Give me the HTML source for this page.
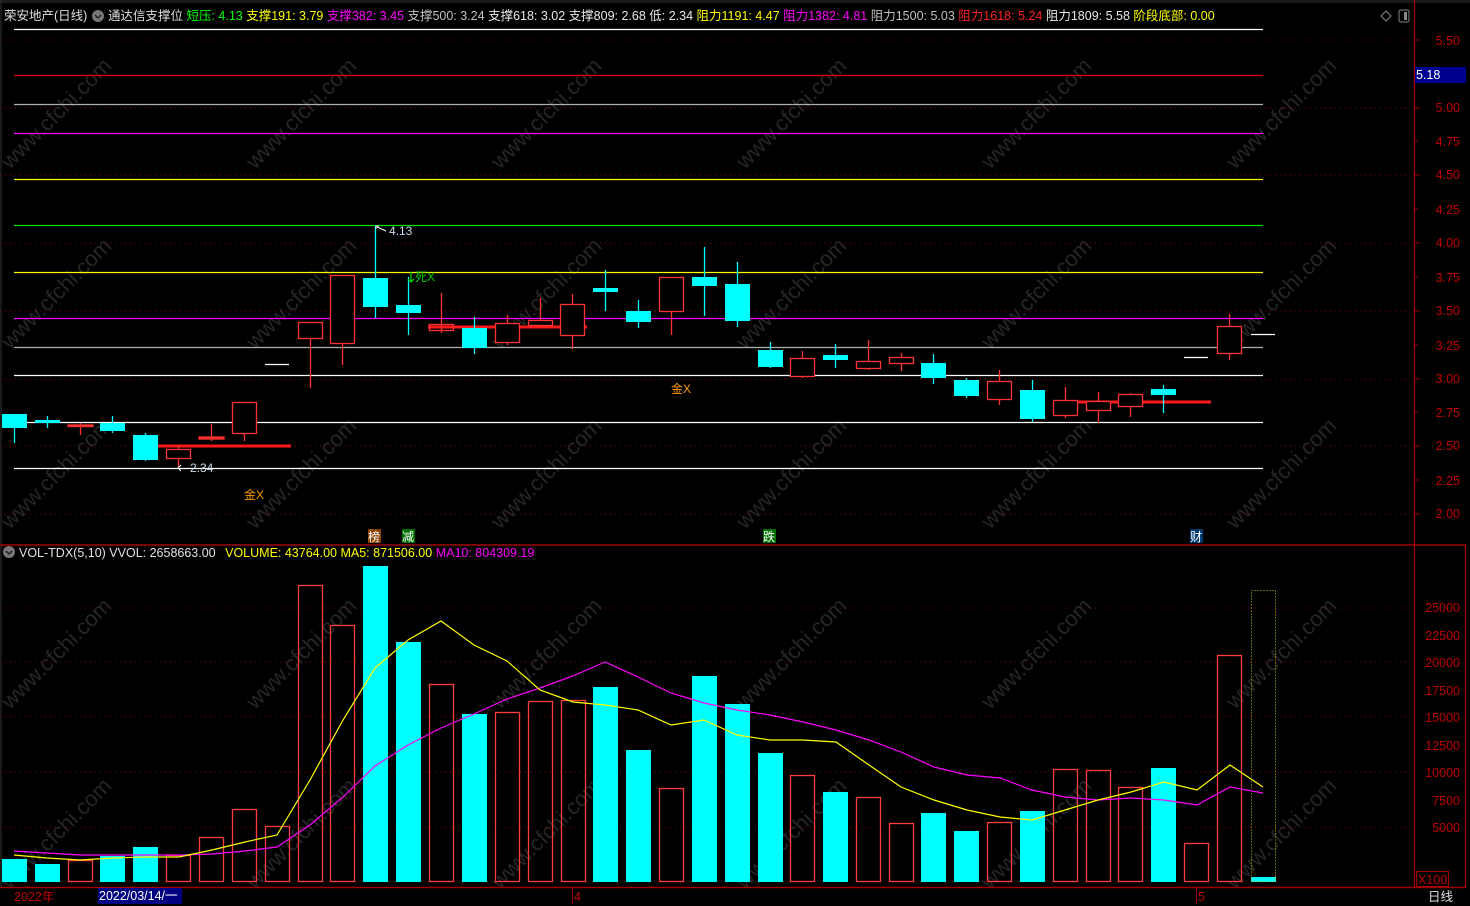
<!DOCTYPE html>
<html><head><meta charset="utf-8"><style>
html,body{margin:0;padding:0;background:#000;width:1470px;height:906px;overflow:hidden}
svg{display:block}
text{font-family:"Liberation Sans","Noto Sans CJK SC",sans-serif}
</style></head><body>
<svg width="1470" height="906" viewBox="0 0 1470 906" xmlns="http://www.w3.org/2000/svg">
<rect width="1470" height="906" fill="#000"/>
<g fill="#262626" font-size="22">
<text transform="translate(10,170) rotate(-45)">www.cfchi.com</text>
<text transform="translate(255,170) rotate(-45)">www.cfchi.com</text>
<text transform="translate(500,170) rotate(-45)">www.cfchi.com</text>
<text transform="translate(745,170) rotate(-45)">www.cfchi.com</text>
<text transform="translate(990,170) rotate(-45)">www.cfchi.com</text>
<text transform="translate(1235,170) rotate(-45)">www.cfchi.com</text>
<text transform="translate(10,350) rotate(-45)">www.cfchi.com</text>
<text transform="translate(255,350) rotate(-45)">www.cfchi.com</text>
<text transform="translate(500,350) rotate(-45)">www.cfchi.com</text>
<text transform="translate(745,350) rotate(-45)">www.cfchi.com</text>
<text transform="translate(990,350) rotate(-45)">www.cfchi.com</text>
<text transform="translate(1235,350) rotate(-45)">www.cfchi.com</text>
<text transform="translate(10,530) rotate(-45)">www.cfchi.com</text>
<text transform="translate(255,530) rotate(-45)">www.cfchi.com</text>
<text transform="translate(500,530) rotate(-45)">www.cfchi.com</text>
<text transform="translate(745,530) rotate(-45)">www.cfchi.com</text>
<text transform="translate(990,530) rotate(-45)">www.cfchi.com</text>
<text transform="translate(1235,530) rotate(-45)">www.cfchi.com</text>
<text transform="translate(10,710) rotate(-45)">www.cfchi.com</text>
<text transform="translate(255,710) rotate(-45)">www.cfchi.com</text>
<text transform="translate(500,710) rotate(-45)">www.cfchi.com</text>
<text transform="translate(745,710) rotate(-45)">www.cfchi.com</text>
<text transform="translate(990,710) rotate(-45)">www.cfchi.com</text>
<text transform="translate(1235,710) rotate(-45)">www.cfchi.com</text>
<text transform="translate(10,890) rotate(-45)">www.cfchi.com</text>
<text transform="translate(255,890) rotate(-45)">www.cfchi.com</text>
<text transform="translate(500,890) rotate(-45)">www.cfchi.com</text>
<text transform="translate(745,890) rotate(-45)">www.cfchi.com</text>
<text transform="translate(990,890) rotate(-45)">www.cfchi.com</text>
<text transform="translate(1235,890) rotate(-45)">www.cfchi.com</text>
</g>
<rect x="0" y="0" width="1470" height="3" fill="#1a1a1a"/>
<line x1="1" y1="0" x2="1" y2="887" stroke="#333" stroke-width="1"/>
<g stroke="#8b0000" stroke-dasharray="1,4" stroke-width="1">
<line x1="0" y1="40" x2="1410" y2="40"/><line x1="0" y1="108" x2="1410" y2="108"/>
<line x1="0" y1="175" x2="1410" y2="175"/><line x1="0" y1="243" x2="1410" y2="243"/>
<line x1="0" y1="311" x2="1410" y2="311"/><line x1="0" y1="379" x2="1410" y2="379"/>
<line x1="0" y1="446" x2="1410" y2="446"/><line x1="0" y1="514" x2="1410" y2="514"/>
<line x1="0" y1="608" x2="1410" y2="608"/><line x1="0" y1="662" x2="1410" y2="662"/>
<line x1="0" y1="717" x2="1410" y2="717"/><line x1="0" y1="772" x2="1410" y2="772"/>
<line x1="0" y1="827" x2="1410" y2="827"/>
</g>
<g stroke-width="1.3">
<line x1="14" y1="29.5" x2="1263" y2="29.5" stroke="#ffffff"/>
<line x1="14" y1="75.5" x2="1263" y2="75.5" stroke="#e00000"/>
<line x1="14" y1="104.5" x2="1263" y2="104.5" stroke="#b0b0b0"/>
<line x1="14" y1="133.5" x2="1263" y2="133.5" stroke="#ff00ff"/>
<line x1="14" y1="179.5" x2="1263" y2="179.5" stroke="#ffff00"/>
<line x1="14" y1="225.5" x2="1263" y2="225.5" stroke="#00e000"/>
<line x1="14" y1="272.5" x2="1263" y2="272.5" stroke="#ffff00"/>
<line x1="14" y1="318.5" x2="1263" y2="318.5" stroke="#ff00ff"/>
<line x1="14" y1="347.5" x2="1263" y2="347.5" stroke="#b0b0b0"/>
<line x1="14" y1="375.5" x2="1263" y2="375.5" stroke="#ffffff"/>
<line x1="14" y1="422.5" x2="1263" y2="422.5" stroke="#ffffff"/>
<line x1="14" y1="468.5" x2="1263" y2="468.5" stroke="#ffffff"/>
</g>
<g stroke="#ff1a1a" stroke-width="3">
<line x1="133" y1="446" x2="291" y2="446"/>
<line x1="428" y1="327" x2="587" y2="327"/>
<line x1="1053" y1="402" x2="1211" y2="402"/>
</g>
<g stroke="#fff" stroke-width="1.3">
<line x1="265" y1="364.5" x2="289" y2="364.5"/>
<line x1="1184" y1="357.5" x2="1208" y2="357.5"/>
<line x1="1251" y1="334.5" x2="1275" y2="334.5"/>
</g>
<g stroke="#00ffff" stroke-width="1.3">
<line x1="14.5" y1="414" x2="14.5" y2="443"/><line x1="47.5" y1="416" x2="47.5" y2="428"/>
<line x1="112.5" y1="416" x2="112.5" y2="433"/><line x1="145.5" y1="433" x2="145.5" y2="461"/>
<line x1="375.5" y1="225" x2="375.5" y2="318"/><line x1="408.5" y1="277" x2="408.5" y2="335"/>
<line x1="474.5" y1="317" x2="474.5" y2="354"/><line x1="605.5" y1="270" x2="605.5" y2="311"/>
<line x1="638.5" y1="300" x2="638.5" y2="328"/><line x1="704.5" y1="247" x2="704.5" y2="316"/>
<line x1="737.5" y1="262" x2="737.5" y2="327"/><line x1="770.5" y1="342" x2="770.5" y2="368"/>
<line x1="835.5" y1="344" x2="835.5" y2="368"/><line x1="933.5" y1="354" x2="933.5" y2="384"/>
<line x1="966.5" y1="378" x2="966.5" y2="398"/><line x1="1032.5" y1="380" x2="1032.5" y2="422"/>
<line x1="1163.5" y1="385" x2="1163.5" y2="413"/>
</g>
<g fill="#00ffff">
<rect x="2" y="414" width="25" height="14"/><rect x="35" y="420" width="25" height="3"/>
<rect x="100" y="423" width="25" height="8"/><rect x="133" y="435" width="25" height="25"/>
<rect x="363" y="278" width="25" height="29"/><rect x="396" y="305" width="25" height="8"/>
<rect x="462" y="328" width="25" height="20"/><rect x="593" y="288" width="25" height="4"/>
<rect x="626" y="311" width="25" height="11"/><rect x="692" y="277" width="25" height="9"/>
<rect x="725" y="284" width="25" height="37"/><rect x="758" y="350" width="25" height="17"/>
<rect x="823" y="355" width="25" height="5"/><rect x="921" y="363" width="25" height="15"/>
<rect x="954" y="380" width="25" height="16"/><rect x="1020" y="390" width="25" height="29"/>
<rect x="1151" y="389" width="25" height="6"/>
</g>
<g stroke="#ff3232" stroke-width="1.3" fill="none">
<line x1="80.5" y1="423" x2="80.5" y2="435"/><rect x="68" y="425" width="25" height="1.5" fill="#ff3232"/>
<line x1="178.5" y1="446" x2="178.5" y2="467"/><rect x="166.5" y="449.5" width="24" height="9" fill="#000"/>
<line x1="211.5" y1="424" x2="211.5" y2="441"/><rect x="199" y="437" width="25" height="2" fill="#ff3232"/>
<line x1="244.5" y1="434" x2="244.5" y2="441"/><rect x="232.5" y="402.5" width="24" height="31" fill="#000"/>
<line x1="310.5" y1="338" x2="310.5" y2="388"/><rect x="298.5" y="322.5" width="24" height="16" fill="#000"/>
<line x1="342.5" y1="343" x2="342.5" y2="365"/><rect x="330.5" y="275.5" width="24" height="68" fill="#000"/>
<line x1="441.5" y1="293" x2="441.5" y2="333"/><rect x="429.5" y="324.5" width="24" height="6" fill="none"/>
<line x1="507.5" y1="315" x2="507.5" y2="345"/><rect x="495.5" y="323.5" width="24" height="19" fill="#000"/>
<line x1="540.5" y1="298" x2="540.5" y2="327"/><rect x="528.5" y="320.5" width="24" height="5" fill="#000"/>
<line x1="572.5" y1="294" x2="572.5" y2="349"/><rect x="560.5" y="304.5" width="24" height="31" fill="#000"/>
<line x1="671.5" y1="311" x2="671.5" y2="335"/><rect x="659.5" y="277.5" width="24" height="34" fill="#000"/>
<line x1="802.5" y1="351" x2="802.5" y2="378"/><rect x="790.5" y="358.5" width="24" height="18" fill="#000"/>
<line x1="868.5" y1="340" x2="868.5" y2="370"/><rect x="856.5" y="361.5" width="24" height="7" fill="#000"/>
<line x1="901.5" y1="353" x2="901.5" y2="371"/><rect x="889.5" y="357.5" width="24" height="6" fill="#000"/>
<line x1="999.5" y1="370" x2="999.5" y2="405"/><rect x="987.5" y="381.5" width="24" height="18" fill="#000"/>
<line x1="1065.5" y1="387" x2="1065.5" y2="418"/><rect x="1053.5" y="400.5" width="24" height="15" fill="#000"/>
<line x1="1098.5" y1="392" x2="1098.5" y2="423"/><rect x="1086.5" y="401.5" width="24" height="9" fill="#000"/>
<line x1="1130.5" y1="393" x2="1130.5" y2="417"/><rect x="1118.5" y="394.5" width="24" height="12" fill="#000"/>
<line x1="1229.5" y1="314" x2="1229.5" y2="360"/><rect x="1217.5" y="326.5" width="24" height="27" fill="#000"/>
</g>
<text x="389" y="235" fill="#c8d8e8" font-size="12">4.13</text>
<path d="M376 229 L376 226 L379 226 M377 227 L386 231" stroke="#fff" fill="none" stroke-width="1"/>
<text x="190" y="472" fill="#c8d8e8" font-size="12">2.34</text>
<path d="M181 465 L178 468 L181 471" stroke="#fff" fill="none" stroke-width="1"/>
<path d="M411 272 L411 282 M408 279 L411 282 L414 279" stroke="#00d000" fill="none" stroke-width="1.3"/>
<text x="415" y="281" fill="#00d000" font-size="12">死X</text>
<text x="244" y="499" fill="#ff9900" font-size="12">金X</text>
<text x="671" y="393" fill="#ff9900" font-size="12">金X</text>
<rect x="368" y="529" width="13" height="14" fill="#8b4000"/><text x="368" y="541" fill="#fff" font-size="12">榜</text>
<rect x="402" y="529" width="13" height="14" fill="#007000"/><text x="402" y="541" fill="#fff" font-size="12">减</text>
<rect x="763" y="529" width="13" height="14" fill="#007000"/><text x="763" y="541" fill="#fff" font-size="12">跌</text>
<rect x="1190" y="529" width="13" height="14" fill="#003870"/><text x="1190" y="541" fill="#fff" font-size="12">财</text>
<text x="4" y="20" font-size="12.5"><tspan fill="#e0e0e0">荣安地产(日线)</tspan></text>
<circle cx="98" cy="16" r="6" fill="#777"/><path d="M95 15 L98 18 L101 15" stroke="#222" fill="none" stroke-width="1.5"/>
<text x="108" y="20" font-size="12.5"><tspan fill="#e0e0e0">通达信支撑位 </tspan><tspan fill="#00ff00">短压: 4.13 </tspan><tspan fill="#ffff00">支撑191: 3.79 </tspan><tspan fill="#ff00ff">支撑382: 3.45 </tspan><tspan fill="#c0c0c0">支撑500: 3.24 </tspan><tspan fill="#e8e8e8">支撑618: 3.02 </tspan><tspan fill="#e8e8e8">支撑809: 2.68 </tspan><tspan fill="#e8e8e8">低: 2.34 </tspan><tspan fill="#ffff00">阻力1191: 4.47 </tspan><tspan fill="#ff00ff">阻力1382: 4.81 </tspan><tspan fill="#c0c0c0">阻力1500: 5.03 </tspan><tspan fill="#ff2020">阻力1618: 5.24 </tspan><tspan fill="#e8e8e8">阻力1809: 5.58 </tspan><tspan fill="#ffff00">阶段底部: 0.00</tspan></text>
<path d="M1386 11 L1391 16 L1386 21 L1381 16 Z" stroke="#888" fill="none"/>
<rect x="1399" y="10" width="10" height="12" rx="2" stroke="#888" fill="none"/><rect x="1404" y="12" width="3" height="8" fill="#888"/>
<line x1="1414.5" y1="0" x2="1414.5" y2="887" stroke="#a00000" stroke-width="1.3"/>
<line x1="1465.5" y1="545" x2="1465.5" y2="887" stroke="#a00000" stroke-width="1.3"/>
<g fill="#c00000" font-size="12.5" text-anchor="end">
<text x="1460" y="45">5.50</text><text x="1460" y="112">5.00</text><text x="1460" y="146">4.75</text>
<text x="1460" y="179">4.50</text><text x="1460" y="214">4.25</text><text x="1460" y="247">4.00</text>
<text x="1460" y="282">3.75</text><text x="1460" y="315">3.50</text><text x="1460" y="350">3.25</text>
<text x="1460" y="383">3.00</text><text x="1460" y="417">2.75</text><text x="1460" y="450">2.50</text>
<text x="1460" y="485">2.25</text><text x="1460" y="518">2.00</text>
</g>
<g stroke="#a00000"><line x1="1415" y1="40" x2="1420" y2="40"/><line x1="1415" y1="108" x2="1420" y2="108"/><line x1="1415" y1="141" x2="1418" y2="141"/><line x1="1415" y1="175" x2="1420" y2="175"/><line x1="1415" y1="209" x2="1418" y2="209"/><line x1="1415" y1="243" x2="1420" y2="243"/><line x1="1415" y1="277" x2="1418" y2="277"/><line x1="1415" y1="311" x2="1420" y2="311"/><line x1="1415" y1="345" x2="1418" y2="345"/><line x1="1415" y1="379" x2="1420" y2="379"/><line x1="1415" y1="412" x2="1418" y2="412"/><line x1="1415" y1="446" x2="1420" y2="446"/><line x1="1415" y1="480" x2="1418" y2="480"/><line x1="1415" y1="514" x2="1420" y2="514"/></g>
<rect x="1415" y="67" width="51" height="16" fill="#000090"/>
<text x="1416" y="79" fill="#fff" font-size="12.5">5.18</text>
<line x1="0" y1="545" x2="1466" y2="545" stroke="#a00000" stroke-width="1.5"/>
<circle cx="9" cy="552" r="6" fill="#777"/><path d="M6 551 L9 554 L12 551" stroke="#222" fill="none" stroke-width="1.5"/>
<text x="19" y="557" font-size="12.5"><tspan fill="#e0e0e0">VOL-TDX(5,10) VVOL: 2658663.00  </tspan><tspan fill="#ffff00" dx="6">VOLUME: 43764.00 MA5: 871506.00 </tspan><tspan fill="#ff00ff">MA10: 804309.19</tspan></text>
<g fill="#00ffff">
<rect x="2" y="859" width="25" height="23"/><rect x="35" y="864" width="25" height="18"/>
<rect x="100" y="856" width="25" height="26"/><rect x="133" y="847" width="25" height="35"/>
<rect x="363" y="566" width="25" height="316"/><rect x="396" y="642" width="25" height="240"/>
<rect x="462" y="714" width="25" height="168"/><rect x="593" y="687" width="25" height="195"/>
<rect x="626" y="750" width="25" height="132"/><rect x="692" y="676" width="25" height="206"/>
<rect x="725" y="704" width="25" height="178"/><rect x="758" y="753" width="25" height="129"/>
<rect x="823" y="792" width="25" height="90"/><rect x="921" y="813" width="25" height="69"/>
<rect x="954" y="831" width="25" height="51"/><rect x="1020" y="811" width="25" height="71"/>
<rect x="1151" y="768" width="25" height="114"/><rect x="1251" y="877" width="25" height="5"/>
</g>
<g fill="none" stroke="#ff3c3c" stroke-width="1.3">
<rect x="68.5" y="860.5" width="24" height="21"/><rect x="166.5" y="855.5" width="24" height="26"/>
<rect x="199.5" y="837.5" width="24" height="44"/><rect x="232.5" y="809.5" width="24" height="72"/>
<rect x="265.5" y="826.5" width="24" height="55"/><rect x="298.5" y="585.5" width="24" height="296"/>
<rect x="330.5" y="625.5" width="24" height="256"/><rect x="429.5" y="684.5" width="24" height="197"/>
<rect x="495.5" y="712.5" width="24" height="169"/><rect x="528.5" y="701.5" width="24" height="180"/>
<rect x="561.5" y="700.5" width="24" height="181"/><rect x="659.5" y="788.5" width="24" height="93"/>
<rect x="790.5" y="775.5" width="24" height="106"/><rect x="856.5" y="797.5" width="24" height="84"/>
<rect x="889.5" y="823.5" width="24" height="58"/><rect x="987.5" y="822.5" width="24" height="59"/>
<rect x="1053.5" y="769.5" width="24" height="112"/><rect x="1086.5" y="770.5" width="24" height="111"/>
<rect x="1118.5" y="787.5" width="24" height="94"/><rect x="1184.5" y="843.5" width="24" height="38"/>
<rect x="1217.5" y="655.5" width="24" height="226"/>
</g>
<rect x="1251.5" y="590.5" width="24" height="291" fill="none" stroke="#cccc00" stroke-dasharray="1,2"/>
<polyline fill="none" stroke="#ff00ff" stroke-width="1.2" points="14,851 47,853 80,855 113,855 146,855 179,855 212,854 245,851 277,847 310,825 343,797 375,766 408,745 441,728 474,714 507,699 540,688 573,676 605,662 638,677 671,693 704,703 737,710 770,715 803,722 836,730 869,740 901,752 934,767 967,775 1000,778 1032,790 1065,797 1098,800 1131,798 1164,800 1197,805 1230,787 1263,793"/>
<polyline fill="none" stroke="#ffff00" stroke-width="1.2" points="14,855 47,858 80,860 113,858 146,857 179,857 212,850 245,842 277,835 310,780 343,720 375,668 408,640 441,621 474,645 507,661 540,690 573,702 605,705 638,710 671,725 704,720 737,735 770,740 803,740 836,742 869,765 901,787 934,800 967,810 1000,817 1032,820 1065,810 1098,800 1131,792 1164,782 1197,790 1230,765 1263,787"/>
<g fill="#c00000" font-size="12.5" text-anchor="end">
<text x="1460" y="612">25000</text><text x="1460" y="640">22500</text><text x="1460" y="667">20000</text>
<text x="1460" y="695">17500</text><text x="1460" y="722">15000</text><text x="1460" y="750">12500</text>
<text x="1460" y="777">10000</text><text x="1460" y="805">7500</text><text x="1460" y="832">5000</text>
</g>
<rect x="1416.5" y="871.5" width="32" height="15" fill="none" stroke="#a00000"/>
<text x="1418" y="884" fill="#c00000" font-size="12.5">X100</text>
<line x1="0" y1="887.5" x2="1466" y2="887.5" stroke="#a00000" stroke-width="1.5"/>
<text x="14" y="901" fill="#c00000" font-size="12.5">2022年</text>
<rect x="98" y="888" width="84" height="16" fill="#000080"/>
<text x="99" y="900" fill="#fff" font-size="12.5">2022/03/14/一</text>
<line x1="572.5" y1="888" x2="572.5" y2="904" stroke="#a00000"/><text x="574" y="901" fill="#c00000" font-size="12.5">4</text>
<line x1="1196.5" y1="888" x2="1196.5" y2="904" stroke="#a00000"/><text x="1198" y="901" fill="#c00000" font-size="12.5">5</text>
<text x="1428" y="901" fill="#e0e0e0" font-size="12.5">日线</text>
</svg>
</body></html>
